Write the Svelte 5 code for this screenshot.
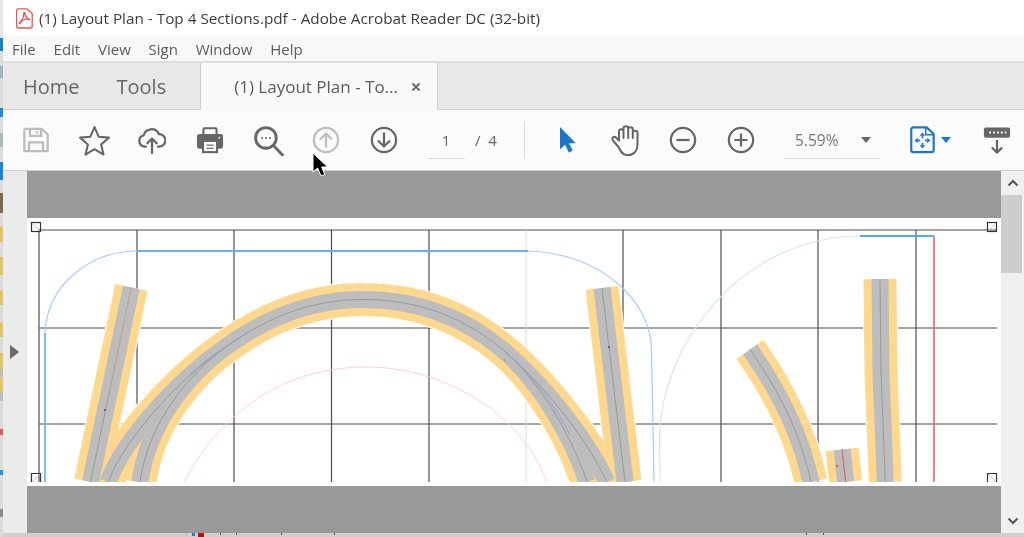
<script>
	// Slice of desktop icons visible left of the window: [height, colour]
	const sliver = [
		[38, "#e6e6e6"], [13, "#1c7cc4"], [15, "#dcdcdc"], [12, "#9fb4c0"], [30, "#dcdcdc"],
		[9, "#2a88d0"], [16, "#dcdcdc"], [14, "#a9bcae"], [15, "#dcdcdc"], [18, "#1c84d8"],
		[13, "#dcdcdc"], [20, "#7a6a50"], [13, "#dcdcdc"], [16, "#e3c468"], [15, "#dcdcdc"],
		[18, "#e3c468"], [15, "#dcdcdc"], [15, "#e3c468"], [17, "#dcdcdc"], [15, "#e3c468"],
		[16, "#dcdcdc"], [16, "#e3c468"], [8, "#bdbdbd"], [15, "#e3c468"], [9, "#bdbdbd"],
		[28, "#dcdcdc"], [6, "#e25a5a"], [35, "#dcdcdc"], [5, "#2a90e0"], [34, "#dcdcdc"],
		[8, "#8a8a8a"], [12, "#dcdcdc"]
	];

	const menu = ["File", "Edit", "View", "Sign", "Window", "Help"];

	const gridX = [39, 137, 234, 331.5, 429, 623, 721, 818, 916];
	const gridY = [230, 328, 424];

	// Track centre lines, in page coordinates of the screenshot
	const tracks = [
		"M131.3,287.5 L90.5,482",
		"M108,482 C125,438 182,372 247,333",
		"M140,482 C147,428 185,370 247,333",
		"M247,333 C285,310 325,299 365,299.5 C420,300 465,318 503,350",
		"M503,350 C540,381 585,435 607,482",
		"M503,350 C535,377 570,430 587,482",
		"M602,288 L625,482",
		"M750,349.5 C775,385 800,430 811,482",
		"M842,449.5 L845.7,482",
		"M880,279 L881,373 L885.3,482"
	];

	// Lighter joints showing through the ballast edge
	const joints = [
		"M119,424 C130,408 145,394 160,382",
		"M340,287 C360,286 380,287 396,289",
		"M578,407 C590,420 600,432 610,446",
		"M760,342 C785,378 812,425 823,480"
	];

	// Bits of desktop text under the window: [gap, width, colour, height]
	const desktopMarks = [
		[183, 1, "#b8b8c8", 3], [5, 3, "#2a78d8", 3], [3, 6, "#b01010", 4], [16, 1, "#555", 2],
		[15, 1, "#555", 2], [44, 1, "#555", 2], [52, 1, "#555", 2], [471, 1, "#555", 2], [16, 1, "#555", 2]
	];
</script>

<div class="screen">
	<div class="sliver">
		{#each sliver as [h, c]}
			<div style="height: {h}px; background: {c}"></div>
		{/each}
	</div>

	<div class="window">
		<div class="titlebar">
			<svg class="pdf-icon" width="17" height="21" viewBox="0 0 17 21" fill="none">
				<path d="M2.5 .8 H11 L16.2 5.5 V18 a2 2 0 0 1 -2 2 H2.5 a2 2 0 0 1 -2 -2 V2.8 a2 2 0 0 1 2 -2 Z" stroke="#e8524f" stroke-width="1.3" />
				<path d="M3.5 14.5 C6 13 8 9 7.8 5.5 C7.6 4 9 4 9 5.5 C9 8 11 11 14 11.5 C10 10.5 6 12 4.5 15 C4 15.8 3 15.2 3.5 14.5 Z" stroke="#e8524f" stroke-width="1.3" />
			</svg>
			<span>(1) Layout Plan - Top 4 Sections.pdf - Adobe Acrobat Reader DC (32-bit)</span>
		</div>

		<div class="menubar">
			{#each menu as item}
				<span>{item}</span>
			{/each}
		</div>

		<div class="tabbar">
			<span class="nav home">Home</span>
			<span class="nav tools">Tools</span>
			<div class="tab">
				<span>(1) Layout Plan - To...</span>
				<svg width="10" height="10" viewBox="0 0 10 10"><path d="M1.5 1.5 L8.5 8.5 M8.5 1.5 L1.5 8.5" stroke="#666" stroke-width="1.8" /></svg>
			</div>
		</div>

		<div class="toolbar">
			<div class="tool">
				<svg viewBox="0 0 30 30" fill="none" stroke="#bcbcbc" stroke-width="2.4">
					<path d="M4 3 H21 L27.5 9 V25.5 a1.5 1.5 0 0 1 -1.5 1.5 H4 a1.5 1.5 0 0 1 -1.5 -1.5 V4.5 a1.5 1.5 0 0 1 1.5 -1.5 Z" />
					<path d="M8.5 3 V10.5 H20.5 V3 M7.5 27 V17.5 H22.5 V27 M16 5.5 V8" />
				</svg>
			</div>
			<div class="tool">
				<svg class="wide" viewBox="0 0 30 30" fill="none" stroke="#666" stroke-width="2" stroke-linejoin="round">
					<path d="M15 2 L19 11.3 L29 12.2 L21.4 18.8 L23.7 28.6 L15 23.4 L6.3 28.6 L8.6 18.8 L1 12.2 L11 11.3 Z" />
				</svg>
			</div>
			<div class="tool">
				<svg viewBox="0 0 30 30" fill="none" stroke="#666" stroke-width="2.4" stroke-linecap="round" stroke-linejoin="round">
					<path d="M8.5 22 H7 a6 6 0 0 1 -1 -11.8 A8.7 8.7 0 0 1 22.5 8.8 a6.6 6.6 0 0 1 .5 13.2 H21.5" />
					<path d="M15 29 V13.5 M10 18.5 L15 13.5 L20 18.5" />
				</svg>
			</div>
			<div class="tool">
				<svg viewBox="0 0 30 30" fill="none">
					<path d="M8 9 V3.5 a1 1 0 0 1 1 -1 H21 a1 1 0 0 1 1 1 V9" stroke="#666" stroke-width="2.2" />
					<rect x="1" y="8.5" width="28" height="16" rx="3" fill="#666" />
					<rect x="7.5" y="16" width="15" height="12" fill="#fbfbfb" stroke="#666" stroke-width="2.2" />
					<path d="M11 20.5 H19 M11 24 H19" stroke="#777" stroke-width="1.4" />
					<circle cx="25" cy="12.5" r="1" fill="#fbfbfb" />
				</svg>
			</div>
			<div class="tool">
				<svg class="wide" viewBox="0 0 30 30" fill="none" stroke="#666" stroke-width="2.7">
					<circle cx="12.5" cy="12.5" r="10" />
					<path d="M20 20 L28.5 29" stroke-linecap="round" />
					<path d="M8 12.5 H9.5 M11.8 12.5 H13.3 M15.6 12.5 H17.1" stroke-width="2" />
				</svg>
			</div>
			<div class="tool">
				<svg viewBox="0 0 30 30" fill="none" stroke="#bdbdbd" stroke-width="2.4">
					<circle cx="15" cy="15" r="13" />
					<path d="M15 23 V8 M8.5 14.5 L15 8 L21.5 14.5" />
				</svg>
			</div>
			<div class="tool">
				<svg viewBox="0 0 30 30" fill="none" stroke="#666" stroke-width="2.4">
					<circle cx="15" cy="15" r="13" />
					<path d="M15 7 V22 M8.5 15.5 L15 22 L21.5 15.5" />
				</svg>
			</div>

			<div class="page-field"><span>1</span></div>
			<span class="page-total">/ &nbsp;4</span>
			<div class="separator"></div>

			<div class="tool">
				<svg viewBox="0 0 30 30" fill="#1b75c9"><path d="M7.5 1 V25 L13 20 L17 28.5 L21 26.5 L17.2 18.5 L24.5 18.5 Z" /></svg>
			</div>
			<div class="tool">
				<svg class="wide" viewBox="0 0 30 31" fill="none" stroke="#666" stroke-width="2" stroke-linejoin="round">
					<path d="M8 22 L2.5 15.5 C0.5 13 3.5 10.5 6 13 L8.5 15.5 V6.5 C8.5 3.5 13 3.5 13 6.5 V13 V3.5 C13 .5 17.7 .5 17.7 3.5 V13 V4.5 C17.7 1.5 22.3 1.5 22.3 4.5 V13 V8 C22.3 5 27 5 27 8 V20 C27 26 23 30 18 30 H16 C12 30 10 26 8 22 Z" />
				</svg>
			</div>
			<div class="tool">
				<svg viewBox="0 0 30 30" fill="none" stroke="#666" stroke-width="2.4">
					<circle cx="15" cy="15" r="13" />
					<path d="M8 15 H22" />
				</svg>
			</div>
			<div class="tool">
				<svg viewBox="0 0 30 30" fill="none" stroke="#666" stroke-width="2.4">
					<circle cx="15" cy="15" r="13" />
					<path d="M8 15 H22 M15 8 V22" />
				</svg>
			</div>

			<div class="zoom-field">
				<span>5.59%</span>
				<i class="caret"></i>
			</div>

			<div class="tool fit">
				<svg viewBox="0 0 30 30" fill="none" stroke="#1b75c9" stroke-width="2.3" stroke-linejoin="round">
					<path d="M5.5 1.5 H20 L27.5 8.5 V26 a2 2 0 0 1 -2 2 H5.5 a2 2 0 0 1 -2 -2 V3.5 a2 2 0 0 1 2 -2 Z" />
					<path d="M19 2 V9.5 H27" stroke-width="1.6" />
					<g fill="#1b75c9" stroke="none">
						<path d="M15.5 7 L18.5 10.5 H12.5 Z M15.5 24 L12.5 20.5 H18.5 Z M7 15.5 L10.5 12.5 V18.5 Z M24 15.5 L20.5 12.5 V18.5 Z" />
						<rect x="14.6" y="10.5" width="1.8" height="2.5" />
						<rect x="14.6" y="18" width="1.8" height="2.5" />
						<rect x="10.5" y="14.6" width="2.5" height="1.8" />
						<rect x="18" y="14.6" width="2.5" height="1.8" />
					</g>
				</svg>
			</div>
			<i class="caret blue"></i>
			<div class="tool reader">
				<svg viewBox="0 0 30 30" fill="none">
					<rect x="1" y="1.5" width="28" height="11" rx="2" fill="#666" />
					<path d="M6.5 7 H8.5 M10.8 7 H12.8 M15 7 H17 M19.2 7 H21.2 M23.4 7 H25" stroke="#fbfbfb" stroke-width="2" />
					<path d="M15 15 V28.5 M9.5 23 L15 28.5 L20.5 23" stroke="#666" stroke-width="2.4" />
				</svg>
			</div>
		</div>

		<div class="viewer">
			<div class="sidepanel"><i class="expand"></i></div>

			<div class="document">
				<div class="pasteboard"></div>
				<div class="page">
					<svg width="974" height="264" viewBox="27 218 974 264" fill="none">
						<!-- grid -->
						<g stroke="#4d4d4d" stroke-width="1.2">
							{#each gridX as x}
								<path d="M{x},230 V482" />
							{/each}
							{#each gridY as y}
								<path d="M39,{y} H997" />
							{/each}
						</g>
						<path d="M526,230 V482" stroke="#dcdcdc" />

						<!-- guide lines -->
						<path d="M184,482 C225,405 290,367 367,367 C440,367 520,410 547,482" stroke="#ffd0d0" />
						<path d="M45,333 C47,285 90,251 137,251" stroke="#a8cbfb" stroke-width="1.2" />
						<path d="M45,333 V482" stroke="#6fb4fb" stroke-width="1.8" />
						<path d="M137,251 H528" stroke="#62aefb" stroke-width="1.8" />
						<path d="M528,251 C600,253 651,300 651.5,350 L654,482" stroke="#a8cbfb" stroke-width="1.2" />
						<path d="M660,482 L659.5,435 C662,345 740,237 860,236" stroke="#d4e4fd" stroke-width="1.2" />
						<path d="M860,236 H934" stroke="#4fa8fc" stroke-width="1.8" />
						<path d="M934,236 V482" stroke="#f2555c" stroke-width="1.5" />

						<!-- corner handles -->
						<g stroke="#333" stroke-width="1.2">
							<rect x="31.5" y="222.5" width="9" height="9" />
							<rect x="987.5" y="222.5" width="9" height="9" />
							<path d="M31.5,482 V473.5 H40.5 V482 M987.5,482 V473.5 H996.5 V482" />
						</g>
						<path d="M32,223 L40,231 M988,231 L996,223 M32,482 L40,474 M988,474 L996,482" stroke="#c8c8c8" />

						<!-- tracks -->
						{#each tracks as d}
							<path {d} stroke="#fff" stroke-width="35" />
						{/each}
						{#each tracks as d}
							<path {d} stroke="#fdd88e" stroke-width="33" />
						{/each}
						{#each joints as d}
							<path {d} stroke="#fee6b8" stroke-width="7" stroke-dasharray="1 12" />
						{/each}
						{#each tracks as d}
							<path {d} stroke="#bdbdbd" stroke-width="17" />
						{/each}
						{#each tracks as d}
							<path {d} stroke="#999" stroke-width="1" />
						{/each}
						<path d="M131.3,287.5 L105,410" stroke="#c9a9a4" />
						<path d="M842,449.5 L845.7,482" stroke="#e0686c" />
						<path d="M190,374 C205,360 225,347 247,333" stroke="#8aa6d8" />
						<path d="M503,350 C530,372 555,405 570,435" stroke="#8aa6d8" />
						<g stroke="none">
							<circle cx="105" cy="410" r="1" fill="#555" />
							<circle cx="243" cy="342" r="1" fill="#a6dca0" />
							<circle cx="505" cy="360" r="1.2" fill="#e88" />
							<circle cx="609" cy="347" r="1" fill="#555" />
							<circle cx="837" cy="466" r="1.2" fill="#e55" />
							<circle cx="881" cy="373" r="1.1" fill="#c9a040" />
						</g>
					</svg>
				</div>
				<div class="pasteboard"></div>
			</div>

			<div class="scrollbar">
				<div class="scroll-btn">
					<svg width="12" height="8" viewBox="0 0 12 8" fill="none"><path d="M1.5 6.5 L6 2 L10.5 6.5" stroke="#555" stroke-width="2" /></svg>
				</div>
				<div class="thumb"></div>
				<div class="spacer"></div>
				<div class="scroll-btn">
					<svg width="12" height="8" viewBox="0 0 12 8" fill="none"><path d="M1.5 1.5 L6 6 L10.5 1.5" stroke="#555" stroke-width="2" /></svg>
				</div>
			</div>
		</div>

		<div class="desktop">
			{#each desktopMarks as [gap, w, c, h]}
				<i style="margin-left: {gap}px; width: {w}px; height: {h}px; background: {c}"></i>
			{/each}
		</div>
	</div>

	<svg class="cursor" width="18" height="26" viewBox="0 0 18 26">
		<path d="M1 1 V20 L5.6 16 L9 24 L12.8 22.4 L9.6 15 L15.6 15 Z" fill="#000" stroke="#fff" stroke-width="1" />
	</svg>
</div>

<style>
	:global(body) {
		margin: 0;
		background: #d8d8d8;
	}

	/* the reference is a slightly soft, rescaled capture */
	.screen {
		position: relative;
		display: flex;
		width: 1024px;
		height: 537px;
		overflow: hidden;
		font-family: "Open Sans", sans-serif;
		color: #555;
		filter: blur(0.35px);
	}

	.sliver {
		width: 3px;
		flex: none;
	}

	.window {
		flex: 1;
		display: flex;
		flex-direction: column;
		min-width: 0;
	}

	.titlebar {
		height: 36px;
		flex: none;
		background: #fff;
		display: flex;
		align-items: center;
		padding-left: 13px;
		gap: 6px;
		font-size: 15.3px;
		color: #3c3c3c;
		box-sizing: border-box;
	}

	.pdf-icon {
		flex: none;
	}

	.menubar {
		height: 27px;
		flex: none;
		box-sizing: border-box;
		background: #f8f8f8;
		border-bottom: 2px solid #dedede;
		display: flex;
		align-items: center;
		padding-left: 9px;
		gap: 17.8px;
		font-size: 15px;
		color: #5c5c5c;
	}

	.tabbar {
		height: 47px;
		flex: none;
		box-sizing: border-box;
		background: #e8e8e8;
		border-bottom: 1px solid #cfcfcf;
		display: flex;
		align-items: center;
		padding-left: 20px;
	}

	.nav {
		font-size: 20px;
		color: #666;
	}

	.home {
		margin-right: 37px;
	}

	.tools {
		margin-right: 34px;
	}

	.tab {
		align-self: stretch;
		height: 47px;
		width: 238px;
		box-sizing: border-box;
		background: #f9f9f9;
		border: 1px solid #cfcfcf;
		border-top: 0;
		border-bottom: 0;
		display: flex;
		align-items: center;
		padding-left: 33px;
		gap: 13px;
		font-size: 17px;
		color: #5c5c5c;
	}

	.toolbar {
		height: 61px;
		flex: none;
		box-sizing: border-box;
		background: #fbfbfb;
		border-bottom: 1px solid #cfcfcf;
		display: flex;
		align-items: center;
		padding-left: 4px;
	}

	.tool {
		width: 58px;
		height: 32px;
		flex: none;
		display: flex;
		align-items: center;
		justify-content: center;
	}

	.tool svg {
		width: 28px;
		height: 28px;
	}

	.tool svg.wide {
		width: 31px;
		height: 31px;
	}

	.page-field {
		margin-left: 14px;
		width: 38px;
		height: 33px;
		box-sizing: border-box;
		border-bottom: 1px solid #dcdcdc;
		display: flex;
		align-items: center;
		justify-content: center;
		font-size: 15px;
		color: #666;
		margin-top: 4px;
		padding-bottom: 4px;
	}

	.page-total {
		margin-left: 10px;
		width: 49px;
		font-size: 15px;
		color: #666;
	}

	.separator {
		width: 1px;
		height: 36px;
		background: #dcdcdc;
		margin-right: 13px;
	}

	.zoom-field {
		margin-left: 14px;
		width: 96px;
		height: 33px;
		box-sizing: border-box;
		border-bottom: 1px solid #dcdcdc;
		display: flex;
		align-items: center;
		padding: 0 9px 4px 11px;
		margin-top: 4px;
		font-size: 15.5px;
		color: #777;
	}

	.caret {
		display: block;
		width: 0;
		height: 0;
		margin-left: auto;
		border-left: 5px solid transparent;
		border-right: 5px solid transparent;
		border-top: 6px solid #666;
	}

	.caret.blue {
		margin-left: 0;
		border-top-color: #1b75c9;
	}

	.tool.fit {
		width: 30px;
		margin-left: 27px;
		margin-right: 4px;
	}

	.tool.reader {
		width: 32px;
		margin-left: 30px;
	}

	.viewer {
		flex: 1;
		min-height: 0;
		display: flex;
	}

	.sidepanel {
		width: 24px;
		flex: none;
		background: #ebebeb;
		display: flex;
		align-items: center;
		justify-content: center;
	}

	.expand {
		display: block;
		width: 0;
		height: 0;
		margin-right: 2px;
		border-top: 7px solid transparent;
		border-bottom: 7px solid transparent;
		border-left: 9px solid #666;
	}

	.document {
		flex: 1;
		display: flex;
		flex-direction: column;
		min-width: 0;
	}

	.pasteboard {
		flex: 1;
		background: #999;
	}

	.page {
		height: 268px;
		flex: none;
		box-sizing: border-box;
		padding-bottom: 4px;
		background: #fff;
	}

	.page svg {
		display: block;
	}

	.scrollbar {
		width: 23px;
		flex: none;
		background: #f0f0f0;
		display: flex;
		flex-direction: column;
	}

	.scroll-btn {
		height: 24px;
		flex: none;
		display: flex;
		align-items: center;
		justify-content: center;
	}

	.thumb {
		height: 78px;
		width: 21px;
		flex: none;
		background: #cdcdcd;
	}

	.spacer {
		flex: 1;
	}

	.desktop {
		height: 4px;
		flex: none;
		background: #cfcfcf;
		display: flex;
		align-items: flex-start;
	}

	.desktop i {
		display: block;
		flex: none;
	}

	.cursor {
		position: absolute;
		left: 312px;
		top: 152px;
	}
</style>
